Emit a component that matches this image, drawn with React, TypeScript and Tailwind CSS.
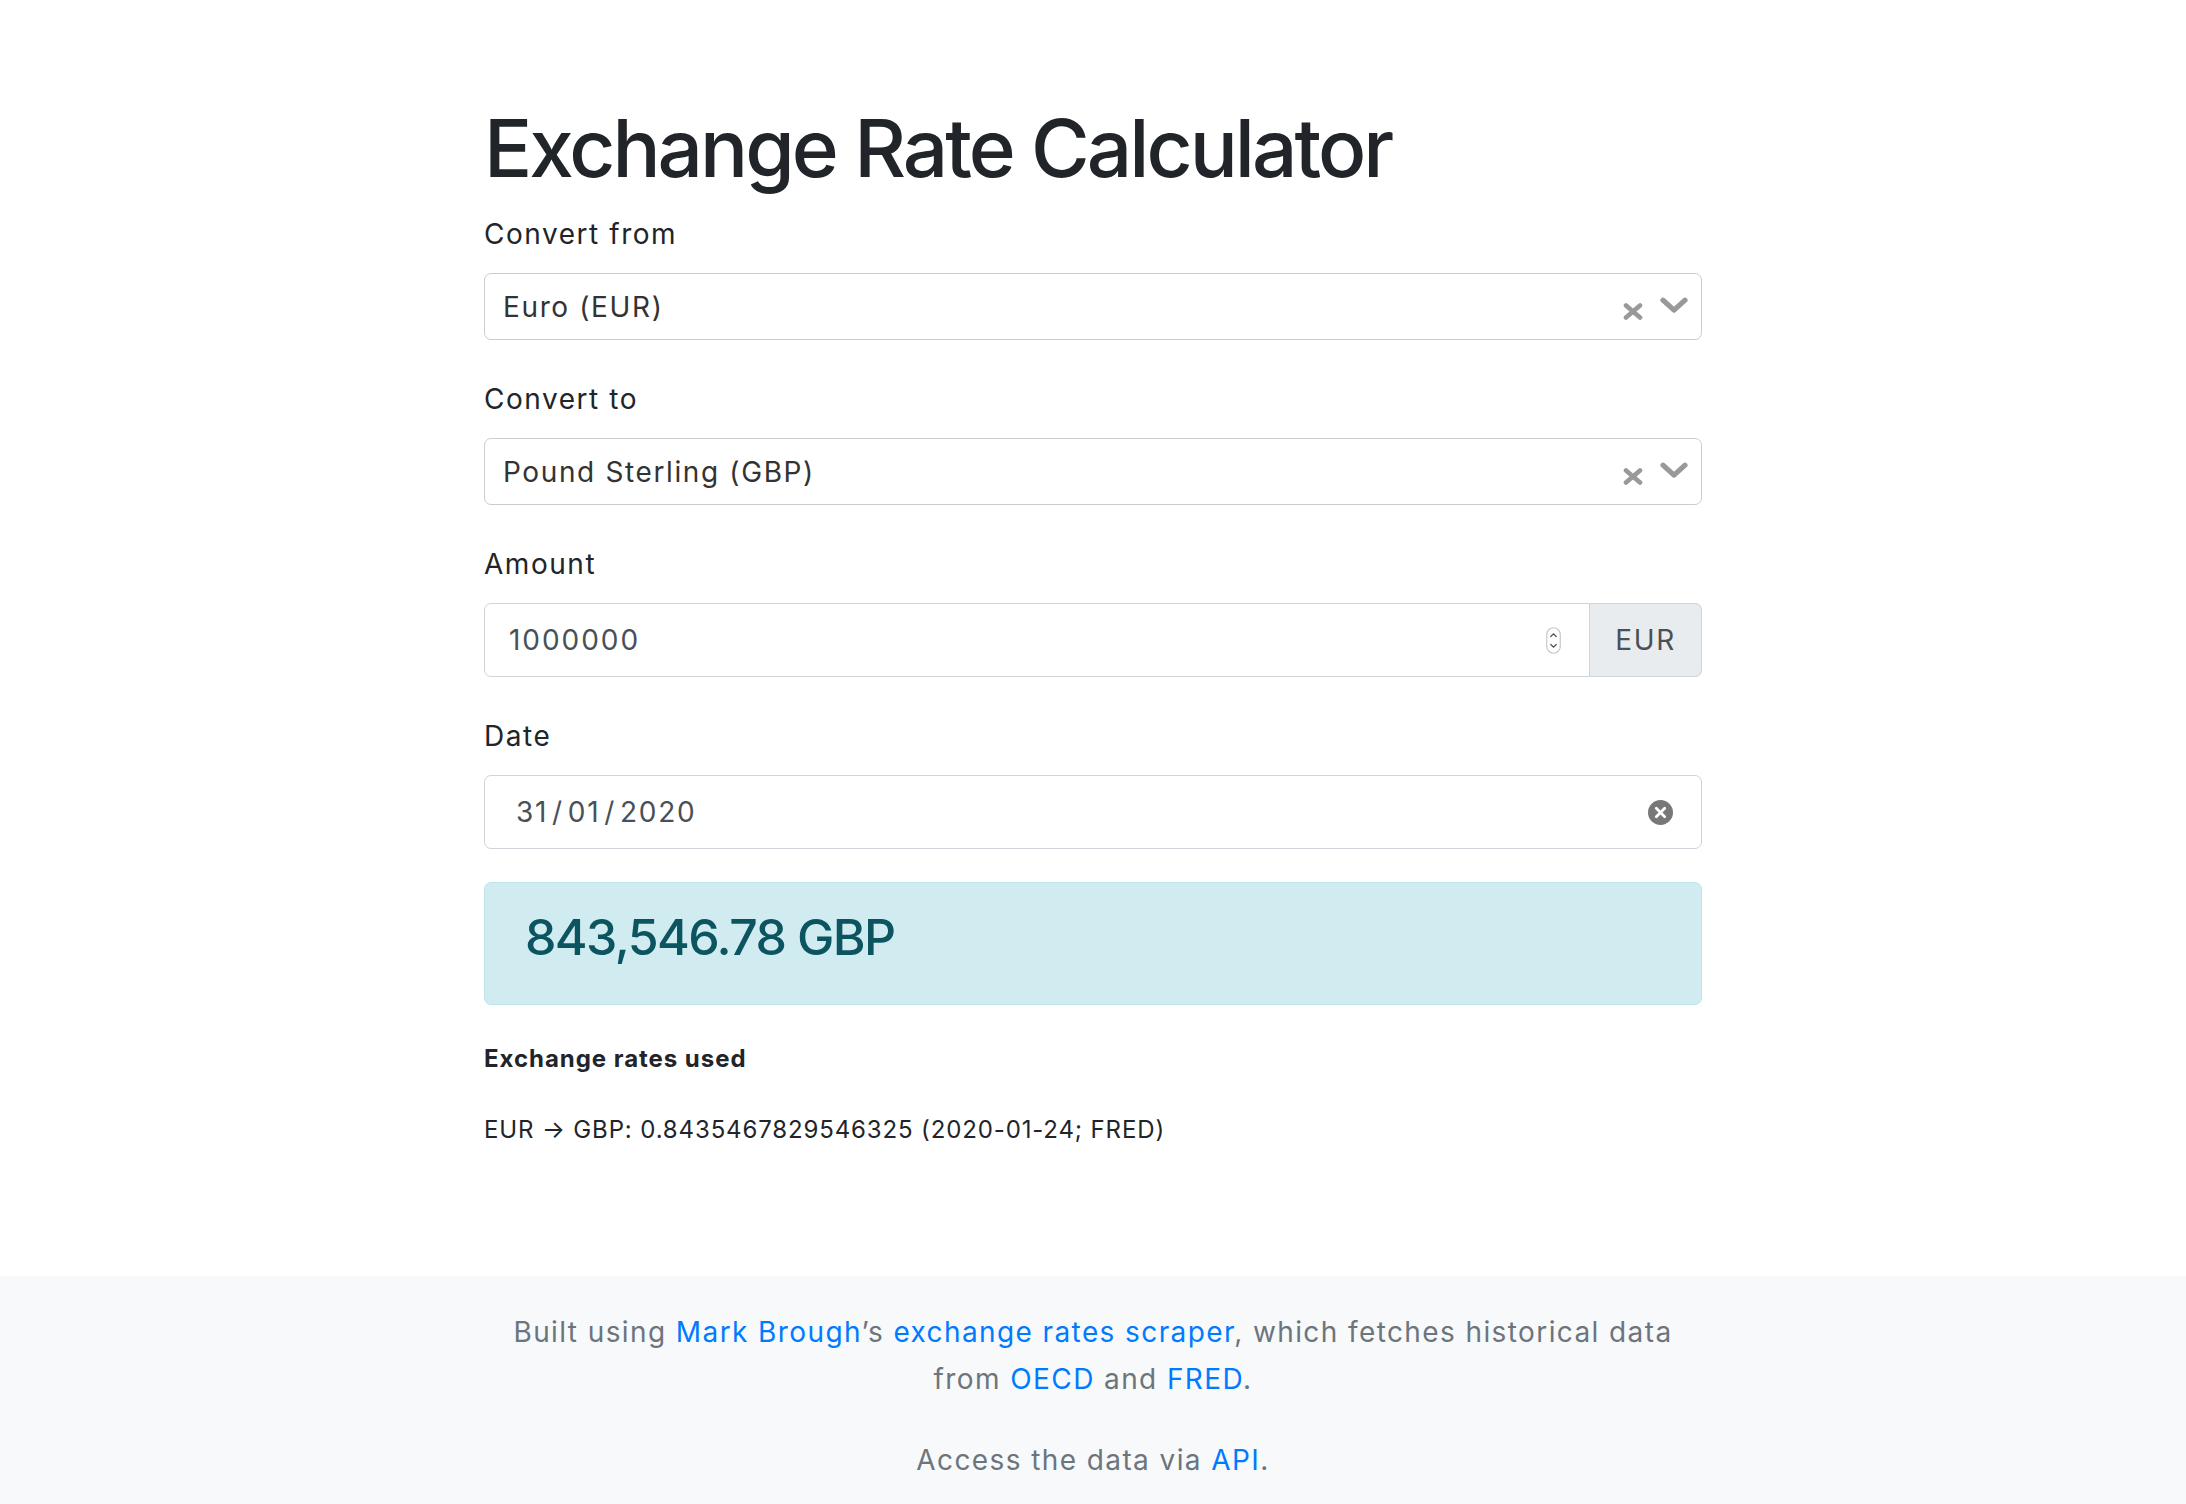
import React from "react";

const FONT = { fontFamily: "Inter, 'Noto Sans', 'Liberation Sans', sans-serif" };

function CrossIcon() {
  return (
    <svg width="20" height="17" viewBox="0 0 20 17" className="mt-[10px]">
      <path d="M3 2.5 L17 14.5 M17 2.5 L3 14.5" stroke="#999999" strokeWidth="4.6" strokeLinecap="round" fill="none" />
    </svg>
  );
}

function ChevronIcon() {
  return (
    <svg width="28" height="17" viewBox="0 0 28 17" className="-mt-[2px]">
      <path d="M3 3.2 L14 13.2 L25 3.2" stroke="#999999" strokeWidth="5.2" strokeLinecap="round" strokeLinejoin="round" fill="none" />
    </svg>
  );
}

function Select({ value }: { value: string }) {
  return (
    <div className="h-[67px] w-full border border-[#cccccc] rounded-[7px] bg-white flex items-center pl-[18px] pr-[13px]">
      <span className="flex-1 text-[28px] tracking-[0.058em] text-[#333333]">{value}</span>
      <div className="flex items-center gap-[17px]">
        <CrossIcon />
        <ChevronIcon />
      </div>
    </div>
  );
}

function Label({ children }: { children: React.ReactNode }) {
  return (
    <div className="text-[28px] leading-[42px] tracking-[0.055em] text-[#212529] mb-[18px]">{children}</div>
  );
}

function Spinner() {
  return (
    <svg width="15" height="27" viewBox="0 0 15 27">
      <rect x="0.75" y="0.75" width="13.5" height="25.5" rx="6.75" fill="white" stroke="#c8c8c8" strokeWidth="1.2" />
      <path d="M4.8 9.5 L7.5 6.8 L10.2 9.5" stroke="#555" strokeWidth="1.3" fill="none" strokeLinecap="round" />
      <path d="M4.8 17.5 L7.5 20.2 L10.2 17.5" stroke="#555" strokeWidth="1.3" fill="none" strokeLinecap="round" />
    </svg>
  );
}

function ClearCircle() {
  return (
    <svg width="25" height="25" viewBox="0 0 25 25">
      <circle cx="12.5" cy="12.5" r="12.5" fill="#787878" />
      <path d="M8.3 8.3 L16.7 16.7 M16.7 8.3 L8.3 16.7" stroke="white" strokeWidth="2.8" strokeLinecap="round" />
    </svg>
  );
}

export default function App() {
  return (
    <div className="min-h-screen bg-white flex flex-col" style={FONT}>
      <main className="w-[1218px] mx-auto pt-[100px] pb-[128px]">
        <h1 className="text-[80px] leading-[96px] font-medium text-[#212529] tracking-[-0.037em] mb-[17px]">
          Exchange Rate Calculator
        </h1>

        <Label>Convert from</Label>
        <Select value="Euro (EUR)" />

        <div className="mt-[38px]">
          <Label>Convert to</Label>
          <Select value="Pound Sterling (GBP)" />
        </div>

        <div className="mt-[38px]">
          <Label>Amount</Label>
          <div className="flex h-[74px]">
            <div className="flex-1 flex items-center border border-[#ced4da] rounded-l-[7px] pl-[24px] pr-[28px] bg-white">
              <span className="flex-1 text-[28px] tracking-[0.07em] text-[#495057]">1000000</span>
              <Spinner />
            </div>
            <div className="w-[112px] flex items-center justify-center bg-[#e9ecef] border border-l-0 border-[#ced4da] rounded-r-[7px] text-[28px] tracking-[0.06em] text-[#495057]">
              EUR
            </div>
          </div>
        </div>

        <div className="mt-[38px]">
          <Label>Date</Label>
          <div className="h-[74px] flex items-center border border-[#ced4da] rounded-[7px] pl-[31px] pr-[28px] bg-white">
            <span className="flex-1 text-[28px] tracking-[0.06em] text-[#495057]">
              31<span className="mx-[4px]">/</span>01<span className="mx-[4px]">/</span>2020
            </span>
            <ClearCircle />
          </div>
        </div>

        <div className="mt-[33px] h-[123px] bg-[#d1ecf1] border border-[#bee5eb] rounded-[7px] pt-[24px] pl-[40px]">
          <div className="text-[50px] leading-[60px] font-medium tracking-[-0.032em] text-[#0c5460]">
            843,546.78 GBP
          </div>
        </div>

        <div className="mt-[36px] text-[24px] leading-[36px] font-bold tracking-[0.04em] text-[#212529]">
          Exchange rates used
        </div>
        <div className="mt-[35px] text-[24px] leading-[36px] tracking-[0.036em] text-[#212529]">
          EUR → GBP: 0.8435467829546325 (2020-01-24; FRED)
        </div>
      </main>

      <footer className="flex-1 bg-[#f8f9fa] pt-[33px] pb-[20px] text-center text-[28px] leading-[47px] tracking-[0.05em] text-[#6c757d]">
        <p className="w-[1218px] mx-auto mb-[34px]">
          Built using <a className="text-[#007bff]">Mark Brough</a>’s{" "}
          <a className="text-[#007bff]">exchange rates scraper</a>, which fetches historical data from{" "}
          <a className="text-[#007bff]">OECD</a> and <a className="text-[#007bff]">FRED</a>.
        </p>
        <p className="w-[1218px] mx-auto">
          Access the data via <a className="text-[#007bff]">API</a>.
        </p>
      </footer>
    </div>
  );
}
